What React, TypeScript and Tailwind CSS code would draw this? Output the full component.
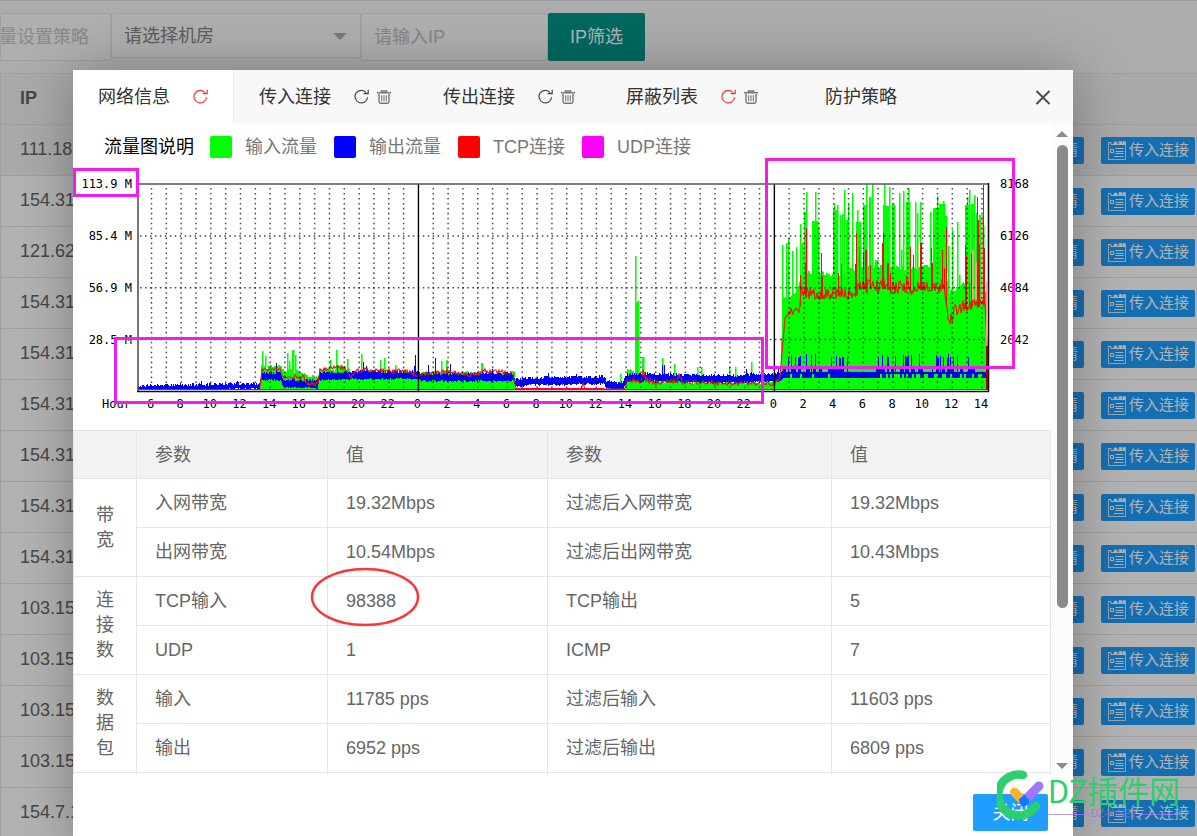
import { useState } from 'react'

const ips = [
  '111.180', '154.31', '121.62', '154.31', '154.31', '154.31', '154.31', '154.31',
  '154.31', '103.15', '103.15', '103.15', '103.15', '154.7.1',
]

const tabs = [
  { label: '网络信息', refresh: 'text-red-500', trash: false, pad: 'pr-[25px]' },
  { label: '传入连接', refresh: 'text-[#444]', trash: true, pad: 'pr-[27px]' },
  { label: '传出连接', refresh: 'text-[#444]', trash: true, pad: 'pr-[26px]' },
  { label: '屏蔽列表', refresh: 'text-red-500', trash: true, pad: 'pr-[42px]' },
  { label: '防护策略', refresh: '', trash: false, pad: 'pr-[25px]' },
]

const legend = [
  { label: '输入流量', color: 'bg-[#00ff00]' },
  { label: '输出流量', color: 'bg-[#0000ff]' },
  { label: 'TCP连接', color: 'bg-[#ff0000]' },
  { label: 'UDP连接', color: 'bg-[#ff00ff]' },
]

const groups = [
  {
    name: '带宽',
    rows: [
      ['入网带宽', '19.32Mbps', '过滤后入网带宽', '19.32Mbps'],
      ['出网带宽', '10.54Mbps', '过滤后出网带宽', '10.43Mbps'],
    ],
  },
  {
    name: '连接数',
    rows: [
      ['TCP输入', '98388', 'TCP输出', '5'],
      ['UDP', '1', 'ICMP', '7'],
    ],
  },
  {
    name: '数据包',
    rows: [
      ['输入', '11785 pps', '过滤后输入', '11603 pps'],
      ['输出', '6952 pps', '过滤后输出', '6809 pps'],
    ],
  },
]

/* ---------- chart data ---------- */

type Point = [number, number]

// stable noise in 0..1, so the graph does not change between renders
function noise(n: number) {
  const v = Math.sin(n * 127.1 + 11.7) * 43758.5453
  return v - Math.floor(v)
}

function level(points: Point[], x: number) {
  for (let i = 1; i < points.length; i++) {
    const [x0, y0] = points[i - 1]
    const [x1, y1] = points[i]
    if (x <= x1) return y0 + ((y1 - y0) * (x - x0)) / (x1 - x0 || 1)
  }
  return points[points.length - 1][1]
}

const BASE = 390

const inLevel: Point[] = [
  [138, 390], [260, 390], [261, 367], [281, 367], [282, 371], [300, 371], [307, 376], [318, 377],
  [319, 370], [334, 369], [336, 366], [346, 368], [350, 372], [366, 370], [380, 372], [418, 373],
  [428, 372], [514, 373], [516, 389], [604, 389], [625, 389], [627, 369], [633, 371], [641, 375],
  [645, 379], [660, 382], [775, 382], [780, 376], [782, 298], [796, 293], [801, 273], [818, 272],
  [838, 276], [850, 270], [868, 267], [880, 266], [900, 268], [930, 267], [945, 273], [949, 292],
  [957, 288], [963, 283], [984, 281], [986, 300], [988, 390],
]

const inSpikes: [number, number, number][] = [
  [262, 351, 1], [265, 356, 1], [287, 353, 1], [289, 361, 1], [292, 350, 2], [295, 355, 1], [336, 350, 1],
  [330, 360, 1], [347, 359, 1], [361, 354, 1], [380, 360, 1], [384, 358, 1], [395, 365, 1], [441, 361, 1],
  [446, 360, 1], [481, 363, 2], [620, 374, 1], [635, 256, 1], [636, 303, 1], [637, 301, 2], [642, 357, 2],
  [662, 358, 1], [674, 364, 1], [697, 367, 1], [701, 367, 1], [729, 367, 1], [735, 367, 1], [751, 362, 1],
  [782, 245, 1], [786, 243, 1], [788, 238, 1], [792, 251, 1], [796, 247, 1], [800, 224, 1], [802, 243, 1],
  [804, 212, 2], [806, 192, 1], [812, 221, 6], [815, 192, 1], [818, 227, 1], [833, 210, 4],
  [834, 204, 1], [837, 205, 1], [840, 215, 1], [842, 214, 1], [844, 190, 1], [846, 220, 2],
  [848, 204, 1], [852, 193, 1], [856, 222, 5], [857, 210, 1], [863, 205, 4], [866, 184, 1], [869, 197, 2],
  [872, 184, 1], [875, 260, 3], [883, 205, 3], [884, 184, 1], [886, 206, 3], [889, 187, 1], [892, 205, 3],
  [893, 203, 1], [899, 193, 1], [901, 250, 1], [903, 191, 1], [906, 202, 4], [908, 188, 1],
  [915, 202, 1], [917, 213, 1], [920, 202, 1], [930, 212, 1], [933, 208, 7], [937, 196, 1],
  [939, 204, 6], [943, 201, 1], [945, 216, 2], [948, 246, 1], [952, 230, 1], [957, 222, 1],
  [959, 275, 1], [965, 205, 5], [967, 197, 1], [969, 190, 1], [971, 204, 3], [974, 195, 1], [976, 213, 1],
  [979, 215, 2], [983, 226, 1],
]

const outLevel: Point[] = [
  [138, 388], [200, 387], [240, 386], [259, 386], [261, 376], [280, 376], [283, 383], [317, 384],
  [319, 376], [365, 375], [418, 375], [420, 377], [513, 377], [515, 383], [530, 381], [604, 380],
  [606, 385], [622, 386], [626, 378], [645, 377], [680, 378], [730, 379], [780, 377], [782, 374], [987, 374],
]

const outSpikes: Point[] = [
  [201, 381], [237, 381], [276, 363], [337, 365], [363, 362], [366, 366], [415, 355], [414, 366],
  [428, 365], [435, 358], [450, 364], [492, 369], [548, 373], [576, 374], [662, 365], [664, 365],
  [746, 369], [751, 372], [778, 366],
]

const tcpLevel: Point[] = [
  [138, 390], [260, 390], [262, 370], [280, 369], [283, 377], [304, 377], [306, 383], [318, 384],
  [320, 370], [335, 367], [345, 368], [351, 378], [355, 371], [366, 370], [380, 371], [405, 371],
  [418, 375], [430, 373], [447, 371], [470, 375], [485, 371], [513, 373], [516, 389], [581, 389],
  [583, 383], [585, 389], [625, 390], [627, 380], [641, 381], [643, 368], [646, 380], [655, 383],
  [677, 381], [679, 374], [682, 382], [700, 383], [760, 383], [775, 384], [780, 377], [783, 340],
  [785, 315], [791, 311], [799, 311], [801, 294], [818, 296], [840, 293], [855, 294], [858, 287],
  [880, 286], [900, 288], [944, 286], [947, 310], [949, 322], [955, 311], [963, 306], [985, 303],
  [987, 345], [988, 390],
]

const tcpSpikes: [number, number, number][] = [
  [800, 275, 1], [805, 263, 1], [806, 228, 1], [821, 253, 1], [822, 276, 1], [838, 273, 1], [841, 264, 1],
  [855, 264, 1], [856, 233, 1], [859, 247, 1], [863, 253, 1], [865, 250, 2], [870, 265, 1], [882, 243, 1],
  [883, 233, 1], [887, 263, 2], [890, 273, 1], [906, 275, 1], [910, 247, 1], [913, 255, 1], [920, 243, 2],
  [931, 248, 1], [932, 263, 1], [942, 250, 1], [946, 227, 1], [944, 268, 1], [965, 245, 1], [966, 255, 1],
  [969, 282, 1], [971, 254, 1], [977, 197, 1], [978, 220, 1], [979, 244, 1], [983, 185, 1], [984, 248, 1],
]

function columns(x0: number, x1: number) {
  return Array.from({ length: x1 - x0 }, (_, i) => x0 + i)
}

const inPath = columns(260, 988)
  .map((x) => {
    const jitter = noise(Math.floor(x / 2)) * 4 - 2
    const top = Math.min(BASE, level(inLevel, x) + (x > 515 && x < 625 ? 0 : jitter))
    return `M${x} ${BASE}V${Math.round(top)}h1V${BASE}z`
  })
  .join('')

const outPath = columns(138, 988)
  .map((x) => {
    if (x > 782) {
      // busy part: a flat band with frequent taller bars
      const quiet = (x > 855 && x < 873) || (x > 922 && x < 932) || x > 976
      const r = quiet ? 0 : noise(x * 3)
      const top = r > 0.82 ? 354 + noise(x) * 4 : noise(Math.floor(x / 3)) > 0.5 && !quiet ? 366 : 372
      const bottom = noise(Math.floor(x / 2) * 7) > 0.3 ? 378 : 374
      return `M${x} ${Math.round(top)}h1V${bottom}h-1z`
    }
    const mid = level(outLevel, x)
    const half = x < 260 ? 2 : 3
    const top = Math.round(mid - half - noise(x) * 3 + 1)
    const bottom = Math.min(BASE, Math.round(mid + half + noise(x + 900) * 2))
    return `M${x} ${top}h1V${bottom}h-1z`
  })
  .join('')

const tcpPath = columns(260, 988)
  .map((x, i) => {
    const spread = x > 800 && x < 945 ? 14 : x > 945 ? 12 : x > 782 ? 6 : x > 515 && x < 625 ? 0 : 4
    const y = level(tcpLevel, x) + (noise(x * 5) - 0.5) * spread
    return `${i ? 'L' : 'M'}${x} ${Math.min(389, Math.round(y))}`
  })
  .join('')

const hours = columns(0, 57).map((i) => ({ x: 151.5 + i * 14.83, hour: (i + 6) % 24 }))

const sideLabels = [
  { y: 184, left: '113.9 M', right: '8168' },
  { y: 236, left: '85.4 M', right: '6126' },
  { y: 288, left: '56.9 M', right: '4084' },
  { y: 340, left: '28.5 M', right: '2042' },
]

function TrafficChart() {
  return (
    <svg viewBox="73 170 978 260" className="block w-full overflow-visible" role="img" aria-label="流量图">
      <g shapeRendering="crispEdges">
        <path d={inPath} fill="#00ff00" />
        {inSpikes.map(([x, y, w]) => (
          <g key={x}>
            <rect x={x} y={y} width={w} height={BASE - y} fill="#00ff00" />
            <rect x={x + w} y={y} width="1" height={Math.max(0, Math.round(level(inLevel, x)) - y)} fill="#00ff00" opacity="0.55" />
          </g>
        ))}
        <path d={outPath} fill="#0000ff" />
        {outSpikes.map(([x, y]) => (
          <rect key={x} x={x} y={y} width="1" height={377 - y > 0 ? 377 - y : 3} fill="#0000ff" />
        ))}
      </g>
      <path d={tcpPath} fill="none" stroke="#ee1800" strokeWidth="1.1" />
      <g shapeRendering="crispEdges">
        <path d="M972.5 250V300M975.5 262V300M981.5 215V300" stroke="#ff9a90" strokeWidth="2" />
        {tcpSpikes.map(([x, y, w]) => (
          <rect key={x} x={x} y={y} width={w} height={Math.round(level(tcpLevel, x)) + 3 - y} fill="#f01000" />
        ))}
        <path d="M516 388.5H604" stroke="#ff0040" strokeWidth="2" />
        <path d="M986.5 282V346" stroke="#ff9a90" strokeWidth="1" />
        <path d="M987 346V390" stroke="#a00" strokeWidth="2" />
        <path d="M138 389.5H987" stroke="#c000c0" strokeWidth="1" />
      </g>

      {/* grid */}
      <g stroke="#000" strokeOpacity="0.7" strokeWidth="1.5" strokeDasharray="1.6 3.36">
        {hours.map(({ x, hour }, i) => (hour === 0 ? null : <path key={i} d={`M${x} 188V390`} />))}
        <path d="M140 236H988M140 287.7H988M140 339.5H988" />
      </g>
      <g fill="none" stroke="#000" strokeWidth="1.4">
        {hours.map(({ x, hour }, i) => (hour === 0 ? <path key={i} d={`M${x} 184V391`} /> : null))}
      </g>
      <path d="M138 391V184H988" fill="none" stroke="#555" strokeWidth="1.6" />
      <path d="M988.5 183V391.5H137" fill="none" stroke="#111" strokeWidth="1.6" />

      {/* axis labels */}
      <g fontFamily="'DejaVu Sans Mono', monospace" fontSize="12" fill="#000">
        {sideLabels.map(({ y, left, right }) => (
          <g key={y}>
            <text x="132" y={y + 4} textAnchor="end">{left}</text>
            <text x="1000" y={y + 4}>{right}</text>
          </g>
        ))}
        <text x="102" y="408">Hour</text>
        {hours.map(({ x, hour }, i) =>
          hour % 2 === 0 ? <text key={i} x={x - 1} y="408" textAnchor="middle">{hour}</text> : null
        )}
      </g>

      {/* highlighted areas */}
      <g fill="none" stroke="#f31cf0" strokeWidth="3">
        <rect x="74.5" y="169.5" width="63" height="26" />
        <rect x="115.5" y="338.5" width="647" height="64" />
        <rect x="766.5" y="159.5" width="247" height="208" />
      </g>
    </svg>
  )
}

function RefreshIcon() {
  return (
    <svg viewBox="0 0 15 15" className="block h-[15px] w-[15px]" fill="none" stroke="currentColor" strokeWidth="1.2">
      <path d="M13.6 8.2A6.3 6.3 0 1 1 12.2 3.6" />
      <path d="M14.2 .8V4.6H9.6" />
    </svg>
  )
}

function TrashIcon() {
  return (
    <svg viewBox="0 0 14 14" className="block h-3.5 w-3.5" fill="none" stroke="currentColor" strokeWidth="1.4">
      <path d="M0 2.8H14M4.3 2.6V1H9.7V2.6" />
      <path d="M2 4V11.6Q2 13.2 3.6 13.2H10.4Q12 13.2 12 11.6V4" />
      <path d="M4.7 5.2V11.2M7 5.2V11.2M9.3 5.2V11.2" strokeWidth="1.1" />
    </svg>
  )
}

function NoteIcon() {
  return (
    <svg viewBox="0 0 20 19" className="h-[19px] w-5 shrink-0" fill="none" stroke="currentColor">
      <path d="M1.5 1V18.5H18.5V4" strokeOpacity=".8" />
      <path d="M1.5 1.5H4V3.5H18.5" />
      <path d="M7 1H10V3.5H7zM12 .5H15V3.5H12zM16 .5H18.5V3.5H16z" fill="currentColor" strokeWidth=".6" />
      <path d="M3.5 8.5H6.5V11.5H3.5zM8.5 7.5H16.5M8.5 10.5H16.5M8.5 12.5H16.5M7 15.5H16.5" />
    </svg>
  )
}

function Toolbar() {
  return (
    <div className="flex items-start border-t border-[#e0e0e0] bg-[#f6f6f6] pt-3 pb-3">
      <button
        type="button"
        disabled
        className="flex h-12 w-[111px] shrink-0 items-center justify-end overflow-hidden rounded-xs border border-[#e6e6e6] bg-[#fbfbfb] pr-[21px] whitespace-nowrap text-[#c4c4c4]"
      >
        量设置策略
      </button>
      <div className="relative w-[250px] shrink-0">
        <select
          aria-label="请选择机房"
          className="h-[45px] w-full appearance-none rounded-xs border border-[#e6e6e6] bg-[#fbfbfb] px-3 text-[#858585]"
        >
          <option>请选择机房</option>
        </select>
        <svg viewBox="0 0 14 7" className="pointer-events-none absolute top-5 right-3.5 h-[7px] w-3.5 fill-[#b0b0b0]">
          <path d="M0 0H14L7 7z" />
        </svg>
      </div>
      <input
        type="text"
        aria-label="请输入IP"
        placeholder="请输入IP"
        className="h-12 w-[187px] shrink-0 rounded-xs border border-[#e6e6e6] bg-[#fbfbfb] px-3 placeholder:text-[#c0c0c0]"
      />
      <button type="button" className="h-12 w-[97px] shrink-0 rounded-xs bg-[#009688] text-white">
        IP筛选
      </button>
    </div>
  )
}

function ServerTable() {
  return (
    <table className="w-full border-collapse border-l border-[#e6e6e6] text-[#666]">
      <thead>
        <tr className="h-[51px] border-y border-[#e6e6e6] bg-[#f2f2f2]">
          <th className="pb-0.5 pl-[19px] text-left font-bold">IP</th>
          <th />
        </tr>
      </thead>
      <tbody>
        {ips.map((ip, i) => (
          <tr key={i} className={`h-[51px] border-b border-[#e6e6e6] ${i === 0 ? 'bg-[#f2f2f2]' : 'bg-white'}`}>
            <td className="pb-0.5 pl-[19px] whitespace-nowrap">{ip}</td>
            <td className="pr-0.5">
              <div className="flex justify-end gap-[17px] text-[15px] text-white">
                <button type="button" className="flex h-[27px] items-center rounded-xs bg-[#1e9fff] px-1.5">
                  <NoteIcon />
                  详情
                </button>
                <button type="button" className="flex h-[27px] items-center gap-0.5 rounded-xs bg-[#1e9fff] px-1.5 whitespace-nowrap">
                  <NoteIcon />
                  传入连接
                </button>
              </div>
            </td>
          </tr>
        ))}
      </tbody>
    </table>
  )
}

function ParamTable() {
  return (
    <table className="w-full table-fixed border-collapse text-[#666]">
      <colgroup>
        <col className="w-[63px]" />
        <col className="w-[191px]" />
        <col className="w-[220px]" />
        <col className="w-[284px]" />
        <col />
      </colgroup>
      <thead>
        <tr className="h-12 bg-[#f2f2f2]">
          {['', '参数', '值', '参数', '值'].map((head, i) => (
            <th key={i} className="border border-[#e6e6e6] px-[18px] text-left font-normal">{head}</th>
          ))}
        </tr>
      </thead>
      <tbody>
        {groups.map((group) =>
          group.rows.map((row, r) => (
            <tr key={row[0]} className="h-[49px]">
              {r === 0 && (
                <th rowSpan={2} className="border border-[#e6e6e6] px-[18px] text-center leading-[25px] font-normal break-all">
                  {group.name}
                </th>
              )}
              {row.map((cell, c) => (
                <td key={c} className="border border-[#e6e6e6] px-[18px] whitespace-nowrap">
                  {cell === '98388' ? (
                    <span className="relative">
                      {cell}
                      <svg viewBox="0 0 110 60" className="absolute -top-6 -left-9 h-[60px] w-[110px] max-w-none">
                        <ellipse cx="55" cy="30" rx="53" ry="28" fill="none" stroke="#fb3636" strokeWidth="2.5" />
                      </svg>
                    </span>
                  ) : (
                    cell
                  )}
                </td>
              ))}
            </tr>
          ))
        )}
        <tr className="h-[49px]">
          {[0, 1, 2, 3, 4].map((i) => (
            <td key={i} className="border border-[#e6e6e6]" />
          ))}
        </tr>
      </tbody>
    </table>
  )
}

function Watermark() {
  return (
    <div className="pointer-events-none absolute right-[17px] bottom-[14px] flex items-center gap-[3px]">
      <svg viewBox="0 0 48 52" className="h-[52px] w-12">
        <path d="M27 5A20.5 20.5 0 1 0 40 36" transform="translate(-1 0)" fill="none" stroke="#2bd06c" strokeWidth="8.5" strokeLinecap="round" />
        <path d="M17.5 22L26 31" stroke="#ffb22e" strokeWidth="9" strokeLinecap="round" />
        <path d="M42 16L27 31" stroke="#9f78ff" strokeWidth="9" strokeLinecap="round" />
        <path d="M22 29L27.5 25L32 30V31.5Q31 36 27 36Q23 36 22.5 32z" fill="#0a78ff" />
      </svg>
      <div className="flex flex-col">
        <span className="text-[31px] leading-9 whitespace-nowrap text-[#2bd06c] font-['Noto_Sans_CJK_SC',sans-serif]">DZ插件网</span>
        <span className="flex items-center gap-0.5 text-[10px] leading-3 text-[#8d6fe8] opacity-70">
          <i className="h-px flex-1 bg-[#9f78ff]" />
          DZ-X.NET
          <i className="h-px flex-1 bg-[#9f78ff]" />
        </span>
      </div>
    </div>
  )
}

export default function App() {
  const [active, setActive] = useState(0)

  return (
    <div className="relative h-screen overflow-hidden bg-white font-['Liberation_Sans','Noto_Sans_CJK_SC',sans-serif] text-[18px] leading-6">
      <Toolbar />
      <ServerTable />

      <div className="absolute inset-0 overflow-hidden bg-black/30 pt-[70px] pr-[124px] pl-[73px]">
        <div role="dialog" aria-label="网络信息" className="bg-white pb-[15px] shadow-[1px_1px_50px_rgba(0,0,0,0.3)]">
          <div className="flex h-[53px] items-stretch bg-[#f8f8f8] text-[#333]">
            {tabs.map((tab, i) => (
              <div
                key={tab.label}
                className={`flex items-center pl-[25px] ${tab.pad} ${i === active ? 'border-r border-[#eee] bg-white' : ''}`}
              >
                <button type="button" className="whitespace-nowrap" onClick={() => setActive(i)}>
                  {tab.label}
                </button>
                {tab.refresh && (
                  <button type="button" aria-label="刷新" className={`ml-[23px] ${tab.refresh}`}>
                    <RefreshIcon />
                  </button>
                )}
                {tab.trash && (
                  <button type="button" aria-label="清空" className="ml-2 text-[#777]">
                    <TrashIcon />
                  </button>
                )}
              </div>
            ))}
            <button type="button" aria-label="关闭窗口" className="mr-[22px] ml-auto text-[#4a4956]">
              <svg viewBox="0 0 16 16" className="h-4 w-4" fill="none" stroke="currentColor" strokeWidth="2">
                <path d="M1.5 2L14.5 15M14.5 2L1.5 15" />
              </svg>
            </button>
          </div>

          <div className="flex h-[652px]">
            <div className="min-w-0 flex-1 overflow-hidden">
              <div className="flex h-[47px] items-center pl-[31px]">
                <span className="w-[106px] whitespace-nowrap text-black">流量图说明</span>
                {legend.map((item) => (
                  <span key={item.label} className="flex w-[124px] items-center gap-[13px] whitespace-nowrap text-[#777]">
                    <i className={`h-[22px] w-[22px] rounded-xs ${item.color}`} />
                    {item.label}
                  </span>
                ))}
              </div>
              <TrafficChart />
              <ParamTable />
            </div>
            <div className="flex w-[22px] flex-col items-center bg-[#fcfcfc] pt-2 pb-1.5">
              <svg viewBox="0 0 12 6" className="h-1.5 w-3 fill-[#8b8b8b]">
                <path d="M6 0L12 6H0z" />
              </svg>
              <div className="mt-2 h-[463px] w-[11px] rounded-full bg-[#8b8b8b]" />
              <svg viewBox="0 0 12 6" className="mt-auto h-1.5 w-3 fill-[#8b8b8b]">
                <path d="M0 0H12L6 6z" />
              </svg>
            </div>
          </div>

          <div className="flex justify-end pt-[19px] pr-[25px]">
            <button type="button" className="h-[37px] w-[75px] rounded-xs bg-[#1e9fff] text-white">
              关闭
            </button>
          </div>
        </div>
      </div>

      <Watermark />
    </div>
  )
}
